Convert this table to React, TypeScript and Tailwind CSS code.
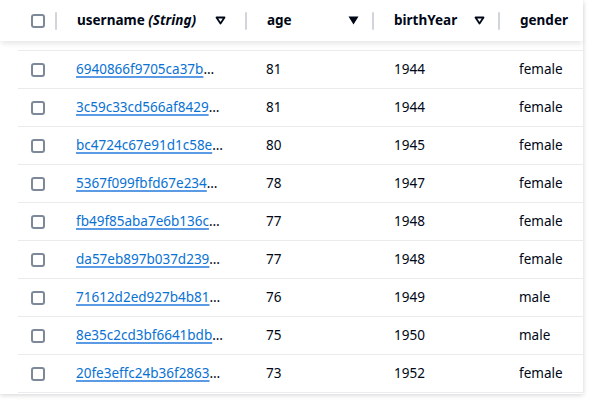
import React from "react";

type Row = { id: string; age: number; birthYear: number; gender: string };

const rows: Row[] = [
  { id: "6940866f9705ca37b", age: 81, birthYear: 1944, gender: "female" },
  { id: "3c59c33cd566af8429", age: 81, birthYear: 1944, gender: "female" },
  { id: "bc4724c67e91d1c58e", age: 80, birthYear: 1945, gender: "female" },
  { id: "5367f099fbfd67e234", age: 78, birthYear: 1947, gender: "female" },
  { id: "fb49f85aba7e6b136c", age: 77, birthYear: 1948, gender: "female" },
  { id: "da57eb897b037d239", age: 77, birthYear: 1948, gender: "female" },
  { id: "71612d2ed927b4b81", age: 76, birthYear: 1949, gender: "male" },
  { id: "8e35c2cd3bf6641bdb", age: 75, birthYear: 1950, gender: "male" },
  { id: "20fe3effc24b36f2863", age: 73, birthYear: 1952, gender: "female" },
];

function Checkbox() {
  return <span className="block w-[14px] h-[14px] rounded-[3px] border-2 border-[#7d8998] bg-white" />;
}

function SortIcon({ active }: { active?: boolean }) {
  return (
    <svg width="11" height="9" viewBox="0 0 11 9" className="shrink-0">
      {active ? (
        <path d="M0.5 0.5 H10.5 L5.5 8.5 Z" fill="#000716" />
      ) : (
        <path d="M1.5 1.5 H9.5 L5.5 7.5 Z" fill="none" stroke="#000716" strokeWidth="1.8" strokeLinejoin="round" />
      )}
    </svg>
  );
}

function Divider() {
  return <span className="block w-[2px] h-[18px] bg-[#d1d5db] rounded-full shrink-0" />;
}

function HeaderCell({ width, pr = "pr-[13px]", children, sort, active }: { width: string; pr?: string; children: React.ReactNode; sort?: boolean; active?: boolean }) {
  return (
    <div className={`flex items-center h-full ${width}`}>
      <Divider />
      <div className={`flex items-center flex-1 pl-[20px] h-full ${pr}`}>
        <span className="flex-1 whitespace-nowrap">{children}</span>
        {sort && <SortIcon active={active} />}
      </div>
    </div>
  );
}

export default function App() {
  return (
    <div className="w-[589px] h-[402px] bg-white overflow-hidden text-[13.5px] text-[#000716]" style={{ fontFamily: '"Noto Sans", "Open Sans", sans-serif' }}>
      <div className="w-[583px] h-[394px] bg-white shadow-[0_1px_5px_rgba(0,7,22,0.18)] relative">
        {/* header */}
        <div className="relative z-10 h-[41px] flex items-center bg-white font-bold shadow-[0_4px_5px_-1px_rgba(0,7,22,0.09)] pl-[18px]">
          <div className="w-[37px] pl-[13px] flex items-center">
            <Checkbox />
          </div>
          <HeaderCell width="w-[190px]" pr="pr-[19px]" sort>
            username <i>(String)</i>
          </HeaderCell>
          <HeaderCell width="w-[127px]" sort active>
            age
          </HeaderCell>
          <HeaderCell width="w-[126px]" sort>
            birthYear
          </HeaderCell>
          <HeaderCell width="flex-1">gender</HeaderCell>
        </div>
        <div className="h-[9px]" />
        {/* rows */}
        <div className="ml-[18px]">
          {rows.map((r) => (
            <div key={r.id} className="h-[38px] border-t border-[#e9ebed] flex items-center">
              <div className="w-[37px] pl-[13px] flex items-center">
                <Checkbox />
              </div>
              <div className="w-[190px] pl-[21px] whitespace-nowrap">
                <a href="#" className="text-[#0972d3] underline underline-offset-2 decoration-2 decoration-[#5b9be6]">
                  {r.id}
                </a>
                <span>…</span>
              </div>
              <div className="w-[127px] pl-[21px]">{r.age}</div>
              <div className="w-[126px] pl-[22px]">{r.birthYear}</div>
              <div className="flex-1 pl-[21px]">{r.gender}</div>
            </div>
          ))}
          <div className="border-t border-[#e9ebed]" />
        </div>
      </div>
    </div>
  );
}
